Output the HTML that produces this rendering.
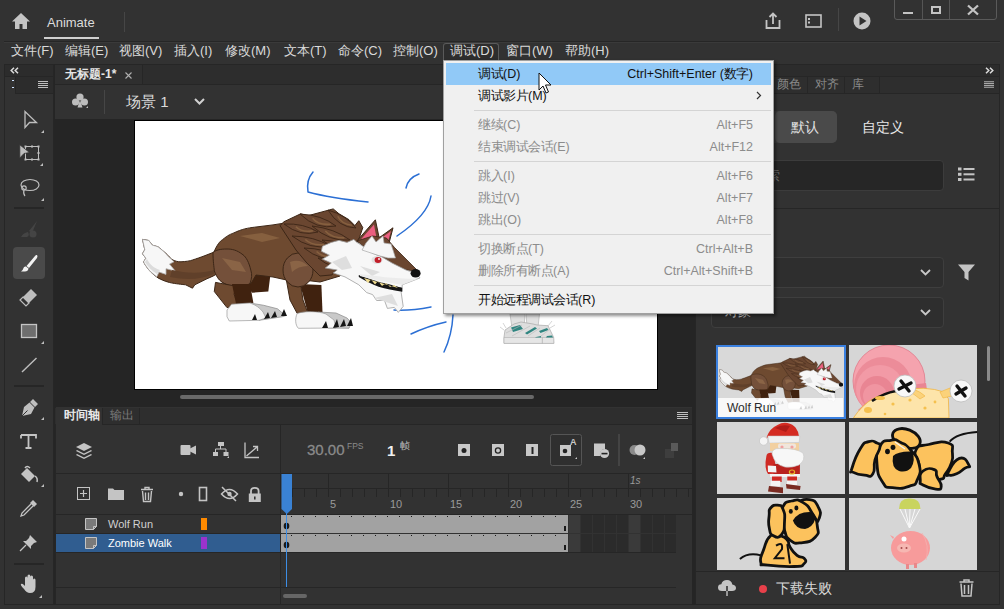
<!DOCTYPE html>
<html><head><meta charset="utf-8">
<style>
*{box-sizing:border-box;margin:0;padding:0}
html,body{width:1004px;height:609px;overflow:hidden;background:#323232;font-family:"Liberation Sans",sans-serif;color:#d6d6d6}
.a{position:absolute}
.t{position:absolute;white-space:nowrap;line-height:1}
svg{position:absolute;overflow:visible}
.c{display:inline-block;width:1em;text-align:center;font-style:normal}
.mi{position:absolute;top:-2px;height:22px;line-height:22px;font-size:13px;color:#dadada;white-space:nowrap}
.pi{position:absolute;left:478px;font-size:12.5px;color:#111;white-space:nowrap;line-height:14px}
.ps{position:absolute;right:251px;font-size:12.5px;color:#111;white-space:nowrap;line-height:14px;text-align:right}
.dis{color:#8c8c8c}
.sep{position:absolute;left:474px;width:297px;height:1px;background:#d4d4d4}
</style></head><body>
<!-- title bar -->
<div class="a" style="left:0;top:0;width:1004px;height:42px;background:#323232"></div>
<div class="a" style="left:4px;top:41px;width:996px;height:1px;background:#262626"></div>
<svg style="left:11px;top:12px" width="20" height="18" viewBox="0 0 20 18"><path d="M10 1 L19 9.5 H16 V17 H11.5 V12 H8.5 V17 H4 V9.5 H1 Z" fill="#c4c4c4"/></svg>
<div class="t" style="left:47px;top:16px;font-size:13px;color:#dcdcdc">Animate</div>
<div class="a" style="left:44px;top:37px;width:55px;height:2px;background:#cfcfcf"></div>
<div class="a" style="left:124px;top:12px;width:1px;height:20px;background:#464646"></div>
<!-- title right icons -->
<svg style="left:764px;top:12px" width="18" height="18" viewBox="0 0 18 18"><path d="M2.5 8 V16 H15.5 V8 M9 12 V2 M5.5 5 L9 1.5 L12.5 5" fill="none" stroke="#c4c4c4" stroke-width="1.8"/></svg>
<svg style="left:805px;top:14px" width="17" height="14" viewBox="0 0 17 14"><rect x="1" y="1" width="15" height="12" fill="none" stroke="#c4c4c4" stroke-width="1.6"/><rect x="3" y="4" width="2" height="2" fill="#c4c4c4"/><rect x="3" y="7.5" width="2" height="2" fill="#c4c4c4"/></svg>
<div class="a" style="left:838px;top:8px;width:1px;height:23px;background:#464646"></div>
<svg style="left:853px;top:12px" width="18" height="18" viewBox="0 0 18 18"><circle cx="9" cy="9" r="8.5" fill="#c4c4c4"/><path d="M6.5 4.5 L13.5 9 L6.5 13.5 Z" fill="#323232"/></svg>
<div class="a" style="left:894px;top:-2px;width:103px;height:22px;border:1px solid #5a5a5a;border-radius:0 0 3px 3px"></div>
<div class="a" style="left:922px;top:0;width:1px;height:19px;background:#555"></div>
<div class="a" style="left:949px;top:0;width:1px;height:19px;background:#555"></div>
<div class="a" style="left:903px;top:12px;width:10px;height:2px;background:#c4c4c4"></div>
<div class="a" style="left:931px;top:6px;width:10px;height:8px;border:2px solid #c4c4c4"></div>
<svg style="left:967px;top:5px" width="12" height="10" viewBox="0 0 12 10"><path d="M1 0.5 L11 9.5 M11 0.5 L1 9.5" stroke="#c4c4c4" stroke-width="2.3"/></svg>
<!-- menu bar -->
<div class="a" style="left:0;top:42px;width:1004px;height:23px;background:#323232"></div>
<div class="a" style="left:4px;top:42px;width:996px;height:1px;background:#3a3a3a"></div>
<div class="a" style="left:443px;top:43px;width:56px;height:17px;border:1px solid #5a5a5a;border-bottom:none;border-radius:3px 3px 0 0;background:#2d2d2d"></div>
<div class="a" style="left:0;top:42px;width:1004px;height:22px">
<div class="mi" style="left:11px"><i class="c">文</i><i class="c">件</i>(F)</div>
<div class="mi" style="left:65px"><i class="c">编</i><i class="c">辑</i>(E)</div>
<div class="mi" style="left:119px"><i class="c">视</i><i class="c">图</i>(V)</div>
<div class="mi" style="left:174px"><i class="c">插</i><i class="c">入</i>(I)</div>
<div class="mi" style="left:225px"><i class="c">修</i><i class="c">改</i>(M)</div>
<div class="mi" style="left:284px"><i class="c">文</i><i class="c">本</i>(T)</div>
<div class="mi" style="left:338px"><i class="c">命</i><i class="c">令</i>(C)</div>
<div class="mi" style="left:393px"><i class="c">控</i><i class="c">制</i>(O)</div>
<div class="mi" style="left:450px"><i class="c">调</i><i class="c">试</i>(D)</div>
<div class="mi" style="left:506px"><i class="c">窗</i><i class="c">口</i>(W)</div>
<div class="mi" style="left:565px"><i class="c">帮</i><i class="c">助</i>(H)</div>
</div>
<!-- left toolbar -->
<div class="a" style="left:53px;top:64px;width:3px;height:541px;background:#252525"></div>
<div class="a" style="left:4px;top:64px;width:50px;height:541px;background:#323232;border:1px solid #262626"></div>
<div class="a" style="left:5px;top:65px;width:48px;height:12px;background:#2c2c2c;border-bottom:1px solid #262626"></div>
<div class="a" style="left:15px;top:77px;width:38px;height:17px;background:#2c2c2c;border-left:1px solid #262626;border-bottom:1px solid #262626"></div>
<svg style="left:10px;top:67px" width="9" height="7" viewBox="0 0 9 7"><path d="M4 .8L1.2 3.5L4 6.2M8 .8L5.2 3.5L8 6.2" fill="none" stroke="#dcdcdc" stroke-width="1.5"/></svg>
<div class="a" style="left:12px;top:80px;width:2px;height:1px;background:#cfe3ff"></div>
<div class="a" style="left:12px;top:87px;width:2px;height:1px;background:#cfe3ff"></div>
<svg style="left:38px;top:81px" width="10" height="7" viewBox="0 0 10 7"><path d="M0 .5H10M0 2.5H10M0 4.5H10M0 6.5H10" stroke="#bdbdbd" stroke-width="1"/></svg>
<!-- tools -->
<svg style="left:0;top:0" width="60" height="609" viewBox="0 0 60 609">
<g fill="none" stroke="#bebebe" stroke-width="1.3">
<path d="M25 111.5 V127.5 L29.5 122.5 H36.5 Z"/>
</g>
<path d="M41 133 L44 130 V133 Z" fill="#bebebe"/>
<!-- free transform -->
<rect x="25.5" y="146.5" width="13" height="13" fill="none" stroke="#bebebe" stroke-width="1"/>
<g fill="#bebebe"><rect x="24.5" y="145.5" width="2" height="2"/><rect x="31" y="145.5" width="2" height="2"/><rect x="37.5" y="145.5" width="2" height="2"/><rect x="37.5" y="152" width="2" height="2"/><rect x="37.5" y="158.5" width="2" height="2"/><rect x="31" y="158.5" width="2" height="2"/><rect x="24.5" y="158.5" width="2" height="2"/></g>
<path d="M19.8 144.8 V158 L24 153.5 L29.5 152.5 Z" fill="#bebebe" stroke="#323232" stroke-width="0.8"/>
<path d="M40 166 L43 163 V166 Z" fill="#bebebe"/>
<!-- lasso -->
<g fill="none" stroke="#bebebe" stroke-width="1.2"><ellipse cx="30" cy="185" rx="9" ry="5.5"/><circle cx="24" cy="188" r="2.2"/><path d="M24 190 Q23 194 25 196"/></g>
<path d="M41 201 L44 198 V201 Z" fill="#bebebe"/>
<rect x="14" y="207" width="30" height="2" fill="#262626"/>
<!-- faded brush -->
<g fill="#444"><path d="M37 221 L29 231 L32 233 Z"/><path d="M28 232 Q23 233 21 237 H27 Q30 236 28 232Z"/><circle cx="33" cy="234" r="3.5"/></g>
<!-- selected brush -->
<rect x="13" y="247" width="32" height="32" rx="4" fill="#4a4a4a"/>
<path d="M37 255 Q38 256 37 258 L29 268 L26.5 266 L35 256 Q36 254.5 37 255Z" fill="#f2f2f2"/>
<path d="M26 266.5 L28.5 268.5 Q28 272 24 271.5 Q22 271.3 21 271.5 Q23 270 23.5 268 Q24 266 26 266.5Z" fill="#f2f2f2"/>
<!-- eraser -->
<path d="M31 289 L37 295 L29 303 L23 297 Z" fill="#bebebe"/>
<path d="M23 297 L29 303 L26 306 L20 300 Z" fill="none" stroke="#bebebe" stroke-width="1.2"/>
<!-- rectangle -->
<rect x="21.5" y="324.5" width="15" height="13" fill="#6e6e6e" stroke="#c4c4c4" stroke-width="1.3"/>
<path d="M41 344 L44 341 V344 Z" fill="#bebebe"/>
<!-- line -->
<path d="M22 372 L36.5 358" stroke="#bebebe" stroke-width="1.4"/>
<rect x="14" y="385" width="30" height="2" fill="#262626"/>
<!-- pen -->
<path d="M33 399 L38 404 L35 407 L30 402Z M29.5 402.5 L34.5 407.5 L31 414 L22 416 L24 407Z" fill="#bebebe"/>
<path d="M22 416 L27.5 410.5" stroke="#323232" stroke-width="1"/>
<path d="M41 420 L44 417 V420 Z" fill="#bebebe"/>
<!-- text T -->
<path d="M21 435 H36 V438.5 M21 435 V438.5 M28.5 435 V448 M25.5 448 H31.5" fill="none" stroke="#c4c4c4" stroke-width="1.8"/>
<!-- bucket -->
<path d="M27 468 L35 476 L29 482 L21 474 Z" fill="#c4c4c4"/>
<path d="M25 468 Q27 465 30 468 M35 476 Q38 478 37 482" fill="none" stroke="#c4c4c4" stroke-width="1.5"/>
<path d="M41 487 L44 484 V487 Z" fill="#bebebe"/>
<!-- eyedropper -->
<path d="M33 500 L37 504 L34 507 L30 503Z" fill="#c4c4c4"/>
<path d="M31 504 L22 513 L21 516 L24 515 L33 506" fill="none" stroke="#c4c4c4" stroke-width="1.3"/>
<!-- pin -->
<path d="M30 535 L37 542 L34 543 L31 546 L31 549 L23 541 L26 541 L29 538 Z" fill="#c4c4c4"/>
<path d="M26 545 L20 551" stroke="#c4c4c4" stroke-width="1.3"/>
<rect x="14" y="563" width="30" height="2" fill="#262626"/>
<!-- hand -->
<path d="M24 589 Q20 585 21 584 Q22 583 24 585 L25 586 V578 Q25 576.5 26.3 576.5 Q27.5 576.5 27.5 578 V583 V576 Q27.5 574.5 29 574.5 Q30.3 574.5 30.3 576 V583 V577 Q30.3 575.5 31.6 575.5 Q33 575.5 33 577 V584 V580 Q33 578.5 34.3 578.5 Q35.5 578.5 35.5 580 V587 Q35.5 593 30 593 Q26.5 593 24 589Z" fill="#c8c8c8"/>
<path d="M39 598 L42 595 V598 Z" fill="#bebebe"/>
</svg>
<!-- document area -->
<div class="a" style="left:55px;top:64px;width:638px;height:21px;background:#2d2d2d;border-top:1px solid #262626;border-bottom:1px solid #262626"></div>
<div class="a" style="left:55px;top:65px;width:88px;height:19px;background:#2f2f2f;border-right:1px solid #262626"></div>
<div class="t" style="left:65px;top:68px;font-size:12px;font-weight:bold;color:#e6e6e6"><i class="c">无</i><i class="c">标</i><i class="c">题</i>-1*</div>
<svg style="left:125px;top:72px" width="7" height="7" viewBox="0 0 7 7"><path d="M.5 .5L6.5 6.5M6.5 .5L.5 6.5" stroke="#b0b0b0" stroke-width="1.1"/></svg>
<div class="a" style="left:55px;top:85px;width:638px;height:34px;background:#323232"></div>
<svg style="left:71px;top:92px" width="18" height="18" viewBox="0 0 18 18"><circle cx="9" cy="5" r="3.6" fill="#bdbdbd"/><circle cx="4.6" cy="10" r="3.6" fill="#bdbdbd"/><circle cx="13.4" cy="10" r="3.6" fill="#bdbdbd"/><path d="M9 8 L11.5 15.5 H6.5Z" fill="#bdbdbd"/><path d="M15 16 L17 14 V16Z" fill="#bdbdbd"/></svg>
<div class="a" style="left:104px;top:90px;width:1px;height:24px;background:#464646"></div>
<div class="t" style="left:126px;top:94px;font-size:15px;color:#dadada"><i class="c">场</i><i class="c">景</i> 1</div>
<svg style="left:194px;top:98px" width="11" height="7" viewBox="0 0 11 7"><path d="M1 1L5.5 5.5L10 1" fill="none" stroke="#d0d0d0" stroke-width="2"/></svg>
<div class="a" style="left:55px;top:119px;width:638px;height:288px;background:#252525"></div>
<div class="a" style="left:134px;top:120px;width:524px;height:270px;background:#fff;border:1px solid #000"></div>
<!-- stage drawing -->
<svg style="left:0;top:0" width="1004" height="609" viewBox="0 0 1004 609">
<g stroke-linejoin="round">
<!-- blue strokes -->
<g fill="none" stroke="#2b6fd4" stroke-width="1.5" stroke-linecap="round">
<path d="M313 172 Q306 180 308 192 Q330 198 368 202"/>
<path d="M419 174 Q408 178 406 188"/>
<path d="M431 196 Q428 215 397 236"/>
<path d="M394 310 Q410 311 431 307"/>
<path d="M411 334 Q428 326 446 322"/>
<path d="M453 315 Q452 335 444 352"/>
</g>
<g id="wolf">
<!-- tail brown -->
<path d="M142.5 239.4 L148.8 240.5 L152.2 245.1 L158 246.8 C162 250 166 253 171.8 259.5 C175 261 178 262 181 261.8 C186 261.5 190 261 192.5 260 C197 258.5 200 257.5 204 256 L214.3 252 L216 274.4 C212 277 208 278 204 280.2 L194.8 284.8 L192.5 288.2 L185.6 284.8 C178 284 174 283.5 169.5 282.5 C164 281 161 279.5 158 277.9 C154 275 151 272.5 148.8 269.8 C146 266 144.5 264 143.6 261.8 L145.9 258.3 L142.5 253.7 L144.8 249.7 Z" fill="#6e4a30" stroke="#3c2616" stroke-width="1"/>
<!-- tail white -->
<path d="M142.5 239.4 L148.8 240.5 L152.2 245.1 L158 246.8 C162 250 165 252.5 168.3 256.6 L174 261.8 L169.5 264.1 L175.2 271 L166 268.7 L166 274.4 L159 272 L156.8 276.7 C153 274 150.5 271.5 148.8 269.8 C146 266 144.5 264 143.6 261.8 L145.9 258.3 L142.5 253.7 L144.8 249.7 Z" fill="#f7f7f7" stroke="#b0b0b0" stroke-width="0.8"/>
<path d="M145 262 C148 267 152 271 157 274 L160 270 C154 268 150 265 147 259Z" fill="#dcdcdc"/>
<path d="M172 270 C185 273 200 274 214 270 L214 274 C200 280 185 280 170 277Z" fill="#60402a"/>
<!-- dark inner back leg -->
<path d="M244 262 L272 262 L268.3 291.5 L252.2 292.7 L246 285 Z" fill="#40220f"/>
<!-- body -->
<path d="M214.3 251.3 C217 245 220 241 222.4 239.8 C228 235 231 234 233.9 232.9 C242 229 248 228 254.5 227.2 L273 224.9 L295 221.4 L318 226 L345 240 L352 262 L340 276 L320 282 L295 279 L286.7 280 L273 277 L256 275 L251 283.5 L238.4 287 C230 286 224 284 222.4 282.4 C216 276 214 270 214.3 262 Z" fill="#6e4a30" stroke="#3c2616" stroke-width="1"/>
<path d="M240 236 L262 233 L280 238 L262 242 Z M290 232 L310 236 L296 244Z" fill="#86603f"/>
<!-- back thigh -->
<path d="M213 252.5 C213 262 214 266 214.3 270.9 C217 278 220 281 222.4 282.4 C229 286 233 287 238.4 287 C244 286 248 285 250 283.5 C252 278 252 274 251 270.9 C249 262 246 257 243 254.8 C237 250 232 249 227 249 C220 249 216 250 213 252.5 Z" fill="#74503a" stroke="#3c2616" stroke-width="1"/>
<path d="M222 258 L240 262 L246 272 L232 270Z" fill="#8a6446"/>
<!-- back leg -->
<path d="M215.5 282.4 L214.3 291.5 L227 307.6 L238.4 305.3 L233.9 293.9 L240.7 287 Z" fill="#6e4a30" stroke="#3c2616" stroke-width="1"/>
<path d="M232 284 L250 284 L253.4 303 L236.1 304.2 Z" fill="#40220f"/>
<!-- back paw -->
<path d="M250 303 L263.7 305.3 L277.5 308.8 L285.6 315.7 L282 316.8 L259 320.3 Z" fill="#c9c9c9" stroke="#8a8a8a" stroke-width="0.7"/>
<path d="M227 310 L231.6 304.2 L250 303 C256 305 260 308 263 312 L266 318 L259 320.3 L229.3 321 L227 316.8 Z" fill="#f7f7f7" stroke="#9a9a9a" stroke-width="0.7"/>
<path d="M252 320 L255 314 L257 320Z M264 319 L268 312 L270 318Z M271 318 L275 311 L277 317Z M281 316 L284 309 L287 316Z" fill="#151515"/>
<!-- front dark inner leg -->
<path d="M300 284 L321.4 285 L322.5 312.2 L307.6 312.2 Z" fill="#40220f"/>
<!-- front leg -->
<path d="M286 278 L300 280 L303 300 L307.6 312.2 L297.2 313.4 L290 300 Z" fill="#6e4a30" stroke="#3c2616" stroke-width="1"/>
<ellipse cx="298" cy="270" rx="15" ry="17" fill="#74503a" stroke="#3c2616" stroke-width="1"/>
<path d="M290 262 Q300 258 308 266 Q298 266 292 272Z" fill="#8a6446"/>
<!-- front paw -->
<path d="M318 312 L336 313 L347 318 L351.3 322.6 L349 328.3 L328 328 Z" fill="#c9c9c9" stroke="#8a8a8a" stroke-width="0.7"/>
<path d="M297.2 313.4 C305 311 318 311 326 314 L334 320 L336 328 L298.4 328.3 C295 325 295 318 297.2 313.4 Z" fill="#f7f7f7" stroke="#9a9a9a" stroke-width="0.7"/>
<path d="M322 328 L326 321 L328 328Z M333 328 L337 319 L339 327Z M340 327 L344 319 L346 326Z M347 326 L351 318 L353 326Z" fill="#151515"/>
<!-- mane feathers -->
<path d="M280 225.6 L284 221.7 L300.7 213.8 L307.6 215.8 L333.2 208.9 L339 213.8 L349 219.7 L354.9 225.6 L358.8 220.7 L362.8 227.6 L358.8 239.4 L345 258 L332 274.9 L320 276 L306 262 L296 250 Z" fill="#6a4630" stroke="#3c2616" stroke-width="1"/>
<path d="M284 224 Q300.6 237.2 318 232 Q303.9 223.1 284 224Z" fill="#6c4832" stroke="#3c2616" stroke-width="0.9"/>
<path d="M295.9 226.8 Q301.7 232.8 312.9 230.8" fill="none" stroke="#86603f" stroke-width="1.6"/>
<path d="M300 214 Q316.6 230.1 336 226 Q321.7 214.9 300 214Z" fill="#6c4832" stroke="#3c2616" stroke-width="0.9"/>
<path d="M312.6 218.2 Q318.2 225.3 330.6 224.2" fill="none" stroke="#86603f" stroke-width="1.6"/>
<path d="M328 210 Q338.5 227.5 356 228 Q346.3 215.4 328 210Z" fill="#6c4832" stroke="#3c2616" stroke-width="0.9"/>
<path d="M337.8 216.3 Q341.0 223.7 351.8 225.3" fill="none" stroke="#86603f" stroke-width="1.6"/>
<path d="M292 236 Q310.6 250.2 330 246 Q314.3 236.3 292 236Z" fill="#6c4832" stroke="#3c2616" stroke-width="0.9"/>
<path d="M305.3 239.5 Q311.8 245.9 324.3 244.5" fill="none" stroke="#86603f" stroke-width="1.6"/>
<path d="M312 226 Q329.8 242.1 350 240 Q334.8 228.6 312 226Z" fill="#6c4832" stroke="#3c2616" stroke-width="0.9"/>
<path d="M325.3 230.9 Q331.3 237.9 344.3 237.9" fill="none" stroke="#86603f" stroke-width="1.6"/>
<path d="M304 248 Q321.4 262.2 340 258 Q325.2 248.3 304 248Z" fill="#6c4832" stroke="#3c2616" stroke-width="0.9"/>
<path d="M316.6 251.5 Q322.6 257.8 334.6 256.5" fill="none" stroke="#86603f" stroke-width="1.6"/>
<path d="M322 240 Q338.4 253.2 356 250 Q342.1 240.9 322 240Z" fill="#6c4832" stroke="#3c2616" stroke-width="0.9"/>
<path d="M333.9 243.5 Q339.6 249.3 350.9 248.5" fill="none" stroke="#86603f" stroke-width="1.6"/>
<path d="M318 258 Q332.4 270.1 348 266 Q335.7 257.8 318 258Z" fill="#6c4832" stroke="#3c2616" stroke-width="0.9"/>
<path d="M328.5 260.8 Q333.5 266.3 343.5 264.8" fill="none" stroke="#86603f" stroke-width="1.6"/>
<!-- ears -->
<path d="M356 242 L375.4 219.8 L380 242 Z" fill="#6a4630" stroke="#3c2616" stroke-width="1"/>
<path d="M359.5 241 L374 224.5 L377 241 Z" fill="#ea5f80"/>
<path d="M376 240 L393 227.8 L388 247 Z" fill="#6a4630" stroke="#3c2616" stroke-width="1"/>
<path d="M379.5 239.5 L391 231 L387 245 Z" fill="#ea5f80"/>
<!-- brown forehead -->
<path d="M357 241 L372.6 236 L386.4 238 L394.3 247.3 L418 271 L406 270 L390 263 L380 257 L366.7 249 Z" fill="#6a4630" stroke="#3c2616" stroke-width="0.8"/>
<!-- white head fur -->
<path d="M322.4 246.3 L331.3 242.4 L339 240.4 L347 242.4 L353.9 239.4 L356.9 242.4 L364 247 L372 253 L382 257 L392 263 L406 270 L416 273.5 L420 277.9 L410 281.8 L402.2 284.8 L402.2 290.7 L401.2 292.6 L403.2 306.4 L398.3 312.4 L394.3 307.4 L387.4 308.4 L384.5 300.5 L376.6 300.5 L372.6 294.6 L366.7 292.6 L358.8 284.8 L345 276.9 L333.2 272.9 L337.2 270 L325.3 268 L331.3 263 L322.4 259.1 L329.3 255.2 L321.4 251.3 Z" fill="#f7f7f7" stroke="#a0a0a0" stroke-width="0.8"/>
<path d="M332 262 L346 256 L352 268 L342 270Z M374 298 L392 294 L398 306Z M360 266 L380 272 L372 276Z" fill="#dedede"/>
<!-- brow -->
<path d="M362 250 L366 243 L372 236 L376 242 L383 236 L384 243 L391 244 L393 250 L395.5 258 L388 258 L380 256 Z" fill="#f6f6f6" stroke="#a8a8a8" stroke-width="0.7"/>
<ellipse cx="377" cy="260" rx="5.5" ry="4" fill="#e2e2e2"/>
<ellipse cx="378" cy="260" rx="3.4" ry="3" fill="#c21f2a"/>
<circle cx="379" cy="259" r="0.9" fill="#fff"/>
<!-- mouth -->
<path d="M358.8 274.9 C370 279 382 282.8 382.5 282.8 C392 285 398 287 402.2 287.7 L402.2 291.7 C392 290 384 288.5 378.6 286.7 C372 284 366 281 358.8 276.9 Z" fill="#151515"/>
<path d="M364 278 L368 283 L371 279.5 L375 284.5 L378 281 L382 286 L386 283 L390 287 L394 285 L398 288 Z" fill="#f0dc90"/>
<path d="M360 274 C375 276 395 279 418 278.8 L410 281.8 L402.2 284.8 C390 283 375 280 360 276Z" fill="#ececec"/>
<ellipse cx="415.6" cy="273.2" rx="5" ry="4.3" fill="#111"/>
</g>
</g>
<!-- zombie ghost feet -->
<g>
<path d="M510 314 H525 L524 328 H512Z M526 314 H539.5 L538 327 H527Z" fill="#e2e2e2" stroke="#b4b4b4" stroke-width="0.7"/>
<path d="M504 337 L505 330 L514 324 L521 322 L533 324 L537 325 L548 325.7 L553.4 336.8 L553.8 343.4 L504 343.4 Z" fill="#dedede" stroke="#a8a8a8" stroke-width="0.7"/>
<path d="M504 337.5 H553.8 V343.4 H504Z" fill="#e6e6e6" stroke="#b0b0b0" stroke-width="0.6"/>
<path d="M542.3 337.5 V343.4" stroke="#a0a0a0" stroke-width="0.6"/>
<g fill="#2f8580"><path d="M511 327.5 L520 325 L523 329 L513 332Z"/><path d="M525 333 L535 327 L537 328.5 L527 334.5Z"/><path d="M539 331 L547 328 L548.5 330 L540.5 333Z"/><path d="M536 337 L541 336 L541 337.5 H535Z"/><path d="M547 336 L552 335.5 L553 337.5 H546Z"/></g>
<g stroke="#b8b8b8" stroke-width="0.6"><path d="M506 333 L522 325"/><path d="M512 336 L530 326"/><path d="M528 336 L540 328"/><path d="M541 336 L550 329"/><path d="M504 330 L500 327 M506 328 L503 323"/><path d="M548 326 L552 321 M550 328 L555 325"/></g>
</g>
</svg>
<div class="a" style="left:180px;top:395px;width:354px;height:4px;border-radius:2px;background:#6a6a6a"></div>
<!-- timeline -->
<div class="a" style="left:55px;top:407px;width:638px;height:198px;background:#323232;border:1px solid #262626;border-top:none"></div>
<div class="a" style="left:55px;top:408px;width:637px;height:17px;background:#2e2e2e;border-bottom:1px solid #262626"></div>
<div class="a" style="left:56px;top:408px;width:47px;height:17px;background:#323232;border-right:1px solid #262626"></div>
<div class="a" style="left:139px;top:408px;width:1px;height:16px;background:#262626"></div>
<div class="t" style="left:64px;top:409px;font-size:12px;color:#e8e8e8;font-weight:bold"><i class="c">时</i><i class="c">间</i><i class="c">轴</i></div>
<div class="t" style="left:110px;top:409px;font-size:12px;color:#7a7a7a"><i class="c">输</i><i class="c">出</i></div>
<svg style="left:677px;top:412px" width="11" height="7" viewBox="0 0 11 7"><path d="M0 .5H11M0 2.5H11M0 4.5H11M0 6.5H11" stroke="#c0c0c0" stroke-width="1"/></svg>
<!-- vertical divider -->
<div class="a" style="left:280px;top:425px;width:1px;height:179px;background:#262626"></div>
<div class="a" style="left:56px;top:473px;width:636px;height:1px;background:#262626"></div>
<!-- toolbar row icons -->
<svg style="left:0;top:0" width="700" height="609" viewBox="0 0 700 609">
<!-- layers -->
<g fill="#c4c4c4"><path d="M84 443 L92 447 L84 451 L76 447Z"/><path d="M77 450 L84 453.5 L91 450 L92 451 L84 455 L76 451Z"/><path d="M77 454 L84 457.5 L91 454 L92 455 L84 459 L76 455Z"/></g>
<!-- camera -->
<rect x="180.5" y="445" width="10" height="10" rx="1" fill="#c4c4c4"/><path d="M190 448.5 L196 445.5 V454.5 L190 451.5Z" fill="#c4c4c4"/>
<!-- hierarchy -->
<g fill="#c4c4c4"><rect x="218" y="442" width="6" height="4"/><rect x="213" y="452" width="5" height="4"/><rect x="223.5" y="452" width="5" height="4"/><path d="M220.5 446V449M215.5 449H226M215.5 449V452M226 449V452" stroke="#c4c4c4" stroke-width="1" fill="none"/><path d="M227 458 L229 456 V458Z"/></g>
<!-- graph -->
<path d="M245 442.5 V457.5 H259" fill="none" stroke="#c4c4c4" stroke-width="1.3"/><path d="M246.5 456 L257 447 M253 446.5 H257.5 V451" fill="none" stroke="#c4c4c4" stroke-width="1.3"/>
<!-- layer control row -->
<rect x="77.5" y="487.5" width="12" height="12" fill="none" stroke="#c4c4c4" stroke-width="1"/><path d="M83.5 490V497M80 493.5H87" stroke="#c4c4c4" stroke-width="1.2"/>
<path d="M108 488.5 H113 L114.5 490 H124 V500 H108Z" fill="#c4c4c4"/>
<g fill="none" stroke="#c4c4c4" stroke-width="1.4"><path d="M141 489.5H153M145 489.5V487.5H149V489.5"/><path d="M142.5 491 L143.5 501.5 H150.5 L151.5 491"/><path d="M145.5 492.5V500M148.5 492.5V500"/></g>
<circle cx="181" cy="494" r="2.2" fill="#c4c4c4"/>
<rect x="199.5" y="487.5" width="7" height="13" fill="none" stroke="#c4c4c4" stroke-width="1.6"/>
<g fill="none" stroke="#c4c4c4" stroke-width="1.5"><path d="M221.5 494 Q229.5 485 237.5 494 Q229.5 503 221.5 494Z"/><path d="M222 487 L236 501"/></g><circle cx="229.5" cy="494" r="2.2" fill="#c4c4c4"/>
<path d="M251 494 V491 Q251 487.8 254.8 487.8 Q258.6 487.8 258.6 491 V494" fill="none" stroke="#c4c4c4" stroke-width="1.8"/><rect x="248.8" y="493.5" width="12" height="8.5" fill="#c4c4c4"/><rect x="254" y="496.5" width="1.6" height="3" fill="#323232"/>
</svg>
<!-- layer rows -->
<div class="a" style="left:56px;top:514px;width:226px;height:1px;background:#262626"></div>
<div class="a" style="left:56px;top:533px;width:226px;height:1px;background:#262626"></div>
<div class="a" style="left:56px;top:534px;width:224px;height:18px;background:#305d90"></div>
<div class="a" style="left:56px;top:552px;width:226px;height:1px;background:#262626"></div>
<svg style="left:84px;top:517px" width="14" height="14" viewBox="0 0 14 14"><path d="M1.5 1.5H12.5V9.5L9.5 12.5H1.5Z" fill="#7a7a7a" stroke="#c4c4c4" stroke-width="1"/><path d="M12.5 9.5H9.5V12.5" fill="none" stroke="#c4c4c4" stroke-width="1"/></svg>
<svg style="left:84px;top:536px" width="14" height="14" viewBox="0 0 14 14"><path d="M1.5 1.5H12.5V9.5L9.5 12.5H1.5Z" fill="#7a7a7a" stroke="#c4c4c4" stroke-width="1"/><path d="M12.5 9.5H9.5V12.5" fill="none" stroke="#c4c4c4" stroke-width="1"/></svg>
<div class="t" style="left:108px;top:519px;font-size:11px;color:#d0d0d0">Wolf Run</div>
<div class="t" style="left:108px;top:538px;font-size:11px;color:#ffffff">Zombie Walk</div>
<div class="a" style="left:201px;top:518px;width:6px;height:12px;background:#ff8a00"></div>
<div class="a" style="left:201px;top:537px;width:6px;height:12px;background:#9b33cc"></div>
<div class="a" style="left:56px;top:587px;width:620px;height:1px;background:#262626"></div>
<div class="a" style="left:283px;top:594px;width:24px;height:4px;border-radius:2px;background:#666"></div>
<!-- ruler/frames -->
<div class="t" style="left:307px;top:442px;font-size:15px;color:#8a8a8a;-webkit-text-stroke:0.3px #8a8a8a">30.00</div>
<div class="t" style="left:347px;top:442px;font-size:8.5px;color:#8a8a8a">FPS</div>
<div class="t" style="left:387px;top:443px;font-size:15px;color:#f0f0f0;font-weight:bold">1</div>
<div class="t" style="left:400px;top:441px;font-size:10px;color:#bbbbbb"><i class="c">帧</i></div>
<svg style="left:0;top:0" width="1004" height="609" viewBox="0 0 1004 609">
<rect x="282" y="488" width="410" height="1" fill="#262626"/>
<rect x="328" y="474" width="1" height="23" fill="#262626"/>
<rect x="388" y="474" width="1" height="23" fill="#262626"/>
<rect x="448" y="474" width="1" height="23" fill="#262626"/>
<rect x="508" y="474" width="1" height="23" fill="#262626"/>
<rect x="568" y="474" width="1" height="23" fill="#262626"/>
<rect x="628" y="474" width="1" height="23" fill="#262626"/>
<rect x="292" y="489" width="1" height="8" fill="#262626"/>
<rect x="304" y="489" width="1" height="8" fill="#262626"/>
<rect x="316" y="489" width="1" height="8" fill="#262626"/>
<rect x="328" y="489" width="1" height="8" fill="#262626"/>
<rect x="340" y="489" width="1" height="8" fill="#262626"/>
<rect x="352" y="489" width="1" height="8" fill="#262626"/>
<rect x="364" y="489" width="1" height="8" fill="#262626"/>
<rect x="376" y="489" width="1" height="8" fill="#262626"/>
<rect x="388" y="489" width="1" height="8" fill="#262626"/>
<rect x="400" y="489" width="1" height="8" fill="#262626"/>
<rect x="412" y="489" width="1" height="8" fill="#262626"/>
<rect x="424" y="489" width="1" height="8" fill="#262626"/>
<rect x="436" y="489" width="1" height="8" fill="#262626"/>
<rect x="448" y="489" width="1" height="8" fill="#262626"/>
<rect x="460" y="489" width="1" height="8" fill="#262626"/>
<rect x="472" y="489" width="1" height="8" fill="#262626"/>
<rect x="484" y="489" width="1" height="8" fill="#262626"/>
<rect x="496" y="489" width="1" height="8" fill="#262626"/>
<rect x="508" y="489" width="1" height="8" fill="#262626"/>
<rect x="520" y="489" width="1" height="8" fill="#262626"/>
<rect x="532" y="489" width="1" height="8" fill="#262626"/>
<rect x="544" y="489" width="1" height="8" fill="#262626"/>
<rect x="556" y="489" width="1" height="8" fill="#262626"/>
<rect x="568" y="489" width="1" height="8" fill="#262626"/>
<rect x="580" y="489" width="1" height="8" fill="#262626"/>
<rect x="592" y="489" width="1" height="8" fill="#262626"/>
<rect x="604" y="489" width="1" height="8" fill="#262626"/>
<rect x="616" y="489" width="1" height="8" fill="#262626"/>
<rect x="628" y="489" width="1" height="8" fill="#262626"/>
<rect x="640" y="489" width="1" height="8" fill="#262626"/>
<rect x="652" y="489" width="1" height="8" fill="#262626"/>
<rect x="664" y="489" width="1" height="8" fill="#262626"/>
<rect x="676" y="489" width="1" height="8" fill="#262626"/>
<rect x="688" y="489" width="1" height="8" fill="#262626"/>
<rect x="282" y="514" width="410" height="1" fill="#262626"/>
<rect x="569" y="515" width="11" height="18" fill="#3a3a3a"/>
<rect x="569" y="534" width="11" height="18" fill="#3a3a3a"/>
<rect x="581" y="515" width="11" height="18" fill="#2b2b2b"/>
<rect x="581" y="534" width="11" height="18" fill="#2b2b2b"/>
<rect x="593" y="515" width="11" height="18" fill="#2b2b2b"/>
<rect x="593" y="534" width="11" height="18" fill="#2b2b2b"/>
<rect x="605" y="515" width="11" height="18" fill="#2b2b2b"/>
<rect x="605" y="534" width="11" height="18" fill="#2b2b2b"/>
<rect x="617" y="515" width="11" height="18" fill="#2b2b2b"/>
<rect x="617" y="534" width="11" height="18" fill="#2b2b2b"/>
<rect x="629" y="515" width="11" height="18" fill="#3a3a3a"/>
<rect x="629" y="534" width="11" height="18" fill="#3a3a3a"/>
<rect x="641" y="515" width="11" height="18" fill="#2b2b2b"/>
<rect x="641" y="534" width="11" height="18" fill="#2b2b2b"/>
<rect x="653" y="515" width="11" height="18" fill="#2b2b2b"/>
<rect x="653" y="534" width="11" height="18" fill="#2b2b2b"/>
<rect x="665" y="515" width="11" height="18" fill="#2b2b2b"/>
<rect x="665" y="534" width="11" height="18" fill="#2b2b2b"/>
<rect x="282" y="552" width="394" height="1" fill="#262626"/>
<rect x="281" y="515" width="287" height="18" fill="#a2a2a2"/>
<ellipse cx="286.5" cy="526" rx="2.8" ry="3.2" fill="#1a1a1a"/>
<rect x="564" y="526" width="2" height="5" fill="#1a1a1a"/>
<rect x="291" y="516" width="1" height="1" fill="#1a1a1a"/>
<rect x="303" y="516" width="1" height="1" fill="#1a1a1a"/>
<rect x="315" y="516" width="1" height="1" fill="#1a1a1a"/>
<rect x="327" y="516" width="1" height="1" fill="#1a1a1a"/>
<rect x="339" y="516" width="1" height="1" fill="#1a1a1a"/>
<rect x="351" y="516" width="1" height="1" fill="#1a1a1a"/>
<rect x="363" y="516" width="1" height="1" fill="#1a1a1a"/>
<rect x="375" y="516" width="1" height="1" fill="#1a1a1a"/>
<rect x="387" y="516" width="1" height="1" fill="#1a1a1a"/>
<rect x="399" y="516" width="1" height="1" fill="#1a1a1a"/>
<rect x="411" y="516" width="1" height="1" fill="#1a1a1a"/>
<rect x="423" y="516" width="1" height="1" fill="#1a1a1a"/>
<rect x="435" y="516" width="1" height="1" fill="#1a1a1a"/>
<rect x="447" y="516" width="1" height="1" fill="#1a1a1a"/>
<rect x="459" y="516" width="1" height="1" fill="#1a1a1a"/>
<rect x="471" y="516" width="1" height="1" fill="#1a1a1a"/>
<rect x="483" y="516" width="1" height="1" fill="#1a1a1a"/>
<rect x="495" y="516" width="1" height="1" fill="#1a1a1a"/>
<rect x="507" y="516" width="1" height="1" fill="#1a1a1a"/>
<rect x="519" y="516" width="1" height="1" fill="#1a1a1a"/>
<rect x="531" y="516" width="1" height="1" fill="#1a1a1a"/>
<rect x="543" y="516" width="1" height="1" fill="#1a1a1a"/>
<rect x="555" y="516" width="1" height="1" fill="#1a1a1a"/>
<rect x="281" y="534" width="287" height="18" fill="#a2a2a2"/>
<ellipse cx="286.5" cy="545" rx="2.8" ry="3.2" fill="#1a1a1a"/>
<rect x="564" y="545" width="2" height="5" fill="#1a1a1a"/>
<rect x="291" y="535" width="1" height="1" fill="#1a1a1a"/>
<rect x="303" y="535" width="1" height="1" fill="#1a1a1a"/>
<rect x="315" y="535" width="1" height="1" fill="#1a1a1a"/>
<rect x="327" y="535" width="1" height="1" fill="#1a1a1a"/>
<rect x="339" y="535" width="1" height="1" fill="#1a1a1a"/>
<rect x="351" y="535" width="1" height="1" fill="#1a1a1a"/>
<rect x="363" y="535" width="1" height="1" fill="#1a1a1a"/>
<rect x="375" y="535" width="1" height="1" fill="#1a1a1a"/>
<rect x="387" y="535" width="1" height="1" fill="#1a1a1a"/>
<rect x="399" y="535" width="1" height="1" fill="#1a1a1a"/>
<rect x="411" y="535" width="1" height="1" fill="#1a1a1a"/>
<rect x="423" y="535" width="1" height="1" fill="#1a1a1a"/>
<rect x="435" y="535" width="1" height="1" fill="#1a1a1a"/>
<rect x="447" y="535" width="1" height="1" fill="#1a1a1a"/>
<rect x="459" y="535" width="1" height="1" fill="#1a1a1a"/>
<rect x="471" y="535" width="1" height="1" fill="#1a1a1a"/>
<rect x="483" y="535" width="1" height="1" fill="#1a1a1a"/>
<rect x="495" y="535" width="1" height="1" fill="#1a1a1a"/>
<rect x="507" y="535" width="1" height="1" fill="#1a1a1a"/>
<rect x="519" y="535" width="1" height="1" fill="#1a1a1a"/>
<rect x="531" y="535" width="1" height="1" fill="#1a1a1a"/>
<rect x="543" y="535" width="1" height="1" fill="#1a1a1a"/>
<rect x="555" y="535" width="1" height="1" fill="#1a1a1a"/>
</svg>
<div class="t" style="left:330px;top:499px;font-size:11px;color:#9a9a9a">5</div>
<div class="t" style="left:390px;top:499px;font-size:11px;color:#9a9a9a">10</div>
<div class="t" style="left:450px;top:499px;font-size:11px;color:#9a9a9a">15</div>
<div class="t" style="left:510px;top:499px;font-size:11px;color:#9a9a9a">20</div>
<div class="t" style="left:570px;top:499px;font-size:11px;color:#9a9a9a">25</div>
<div class="t" style="left:630px;top:499px;font-size:11px;color:#9a9a9a">30</div>
<div class="t" style="left:630px;top:476px;font-size:10px;font-style:italic;color:#9a9a9a">1s</div>
<!-- frame buttons -->
<svg style="left:0;top:0" width="1004" height="609" viewBox="0 0 1004 609">
<rect x="458" y="444" width="12" height="12" fill="#c8c8c8"/><circle cx="464" cy="450.5" r="2.5" fill="#222"/>
<rect x="492" y="444" width="12" height="12" fill="#c8c8c8"/><circle cx="498" cy="450.5" r="2.6" fill="none" stroke="#222" stroke-width="1.3"/>
<rect x="526" y="444" width="12" height="12" fill="#c8c8c8"/><rect x="531.5" y="447" width="2" height="7" fill="#222"/>
<rect x="550.5" y="434.5" width="31" height="31" rx="2" fill="#2f2f2f" stroke="#555" stroke-width="1"/>
<rect x="560" y="445" width="11" height="11" fill="#c8c8c8"/><circle cx="565" cy="451" r="2.3" fill="#222"/>
<text x="570" y="445" font-size="9" font-family="Liberation Sans" font-weight="bold" fill="#c8c8c8">A</text>
<path d="M575 459 L577 457 V459Z" fill="#c8c8c8"/>
<path d="M594 443.5 H605 V449 A5 5 0 0 0 600.5 456 H594Z" fill="#c8c8c8"/><circle cx="604.5" cy="453.5" r="4.6" fill="#c8c8c8"/><rect x="601.5" y="452.8" width="6" height="1.6" fill="#222"/>
<rect x="618" y="434" width="2" height="32" fill="#444"/>
<circle cx="634.5" cy="450" r="5" fill="#8a8a8a"/><circle cx="640" cy="450" r="5.5" fill="#c8c8c8"/><path d="M643 459 L645 457 V459Z" fill="#c8c8c8"/>
<rect x="665" y="449" width="9" height="9" fill="#3e3e3e"/><rect x="671" y="443" width="7" height="8" fill="#5a5a5a"/>
<!-- playhead -->
<rect x="286" y="485" width="1" height="102" fill="#3d8ee6"/>
<path d="M281.5 474 H292 V509 L286.8 514 L281.5 509Z" fill="#3a82d4"/>
</svg>
<!-- right panel -->
<div class="a" style="left:692px;top:64px;width:3px;height:541px;background:#252525"></div>
<div class="a" style="left:695px;top:64px;width:305px;height:541px;background:#323232;border:1px solid #262626"></div>
<div class="a" style="left:696px;top:65px;width:303px;height:12px;background:#2c2c2c;border-bottom:1px solid #262626"></div>
<div class="a" style="left:696px;top:77px;width:303px;height:17px;background:#2e2e2e;border-bottom:1px solid #262626"></div>
<svg style="left:985px;top:67px" width="9" height="7" viewBox="0 0 9 7"><path d="M1 .8L3.8 3.5L1 6.2M5 .8L7.8 3.5L5 6.2" fill="none" stroke="#dcdcdc" stroke-width="1.5"/></svg>
<div class="a" style="left:807px;top:76px;width:1px;height:17px;background:#262626"></div>
<div class="a" style="left:844px;top:76px;width:1px;height:17px;background:#262626"></div>
<div class="a" style="left:879px;top:76px;width:1px;height:17px;background:#262626"></div>
<div class="t" style="left:777px;top:79px;font-size:11.5px;color:#8a8a8a"><i class="c">颜</i><i class="c">色</i></div>
<div class="t" style="left:815px;top:79px;font-size:11.5px;color:#8a8a8a"><i class="c">对</i><i class="c">齐</i></div>
<div class="t" style="left:852px;top:79px;font-size:11.5px;color:#8a8a8a"><i class="c">库</i></div>
<svg style="left:984px;top:81px" width="10" height="7" viewBox="0 0 11 7"><path d="M0 .5H11M0 2.5H11M0 4.5H11M0 6.5H11" stroke="#c0c0c0" stroke-width="1"/></svg>
<div class="a" style="left:713px;top:111px;width:124px;height:32px;border-radius:5px;background:#3c3c3c"></div>
<div class="a" style="left:775px;top:111px;width:62px;height:32px;border-radius:5px;background:#4a4a4a"></div>
<div class="t" style="left:791px;top:120px;font-size:14px;color:#e0e0e0"><i class="c">默</i><i class="c">认</i></div>
<div class="t" style="left:862px;top:120px;font-size:14px;color:#e8e8e8"><i class="c">自</i><i class="c">定</i><i class="c">义</i></div>
<div class="a" style="left:711px;top:160px;width:233px;height:31px;border-radius:4px;background:#262626;border:1px solid #3c3c3c"></div>
<div class="t" style="left:754px;top:169px;font-size:13px;color:#6e6e6e"><i class="c">搜</i><i class="c">索</i></div>
<svg style="left:958px;top:167px" width="18" height="15" viewBox="0 0 18 15"><g fill="#c4c4c4"><rect x="0" y="0.5" width="3.5" height="3"/><rect x="0" y="5.8" width="3.5" height="3"/><rect x="0" y="11" width="3.5" height="3"/><rect x="5.5" y="1" width="11" height="2"/><rect x="5.5" y="6.3" width="11" height="2"/><rect x="5.5" y="11.5" width="11" height="2"/></g></svg>
<div class="a" style="left:696px;top:208px;width:303px;height:1px;background:#262626"></div>
<div class="a" style="left:711px;top:257px;width:233px;height:31px;border-radius:4px;background:#2e2e2e;border:1px solid #3e3e3e"></div>
<svg style="left:920px;top:269px" width="11" height="7" viewBox="0 0 11 7"><path d="M1 1L5.5 5.5L10 1" fill="none" stroke="#c8c8c8" stroke-width="1.8"/></svg>
<svg style="left:958px;top:264px" width="17" height="17" viewBox="0 0 17 17"><path d="M0 0.5H17L10.5 8V16.5L6.5 14V8Z" fill="#c4c4c4"/></svg>
<div class="a" style="left:711px;top:297px;width:233px;height:31px;border-radius:4px;background:#2e2e2e;border:1px solid #3e3e3e"></div>
<div class="t" style="left:725px;top:305px;font-size:13px;color:#d0d0d0"><i class="c">对</i><i class="c">象</i></div>
<svg style="left:920px;top:309px" width="11" height="7" viewBox="0 0 11 7"><path d="M1 1L5.5 5.5L10 1" fill="none" stroke="#c8c8c8" stroke-width="1.8"/></svg>
<!-- thumbnails -->
<div class="a" style="left:716px;top:345px;width:130px;height:74px;background:#d9d9d9;border:2px solid #3a80e0"></div>
<div class="a" style="left:849px;top:345px;width:128px;height:73px;background:#d6d6d6"></div>
<div class="a" style="left:717px;top:422px;width:128px;height:72px;background:#d6d6d6"></div>
<div class="a" style="left:849px;top:422px;width:128px;height:72px;background:#d6d6d6"></div>
<div class="a" style="left:717px;top:498px;width:128px;height:72px;background:#d6d6d6"></div>
<div class="a" style="left:849px;top:498px;width:128px;height:72px;background:#d6d6d6"></div>
<svg style="left:0;top:0" width="1004" height="609" viewBox="0 0 1004 609">
<defs>
<clipPath id="c2"><rect x="849" y="345" width="128" height="73"/></clipPath>
<clipPath id="c1"><rect x="718" y="347" width="125" height="70"/></clipPath>
</defs>
<g clip-path="url(#c1)"><use href="#wolf" transform="matrix(0.445 0 0 0.445 656.1 263.2)"/></g>
<!-- snail -->
<g clip-path="url(#c2)">
<circle cx="889" cy="381" r="36" fill="#f5a3ae" stroke="#e07a8a" stroke-width="0.8"/>
<circle cx="883" cy="386" r="29" fill="#ec8c99"/>
<circle cx="880" cy="389" r="24" fill="#f29aa6"/>
<circle cx="877" cy="393" r="17" fill="#e98593"/>
<circle cx="875" cy="396" r="12" fill="#f095a1"/>
<path d="M858 410 Q880 388 926 383 L927 390 Q885 395 862 414Z" fill="#e98593"/>
<path d="M853.4 418 Q862 405 873 398.7 Q884 393 894 391.7 Q910 388 923.2 388.2 Q936 389 942.8 391.7 L948.4 398.7 L949 418 Z" fill="#fde4aa" stroke="#f0b440" stroke-width="0.8"/>
<path d="M872 401 Q884 393 896 391" fill="none" stroke="#111" stroke-width="2.6"/>
<g fill="#f5c04e"><ellipse cx="868" cy="410" rx="4" ry="3"/><circle cx="893" cy="404" r="1.6"/><circle cx="910" cy="400" r="1.6"/><circle cx="925" cy="408" r="1.6"/><circle cx="885" cy="414" r="1.3"/><circle cx="935" cy="402" r="1.4"/><ellipse cx="880" cy="398" rx="5" ry="2"/></g>
<path d="M913 389 Q921 392 925 396 L920 399 Q914 394 910 392Z" fill="#fbd27a" stroke="#f0b440" stroke-width="0.6"/>
<circle cx="905" cy="386" r="11" fill="#f8f8f8" stroke="#bbb" stroke-width="0.8"/>
<path d="M901 381 L909 391 M911 383 L899 389" stroke="#111" stroke-width="3.4" stroke-linecap="round"/>
<path d="M940 392 L950 388 L952 396 L943 398Z" fill="#fbd27a" stroke="#f0b440" stroke-width="0.6"/>
<circle cx="961" cy="391" r="11" fill="#f8f8f8" stroke="#bbb" stroke-width="0.8"/>
<path d="M957 386 L965 396 M966 388 L956 394" stroke="#111" stroke-width="3.4" stroke-linecap="round"/>
</g>
<!-- santa -->
<g>
<path d="M766.4 437.5 Q770 428 777.5 425 Q782 422 787.3 422.9 Q793 424 795.7 427.8 Q799 432 799.2 437.5Z" fill="#d42b22"/>
<path d="M775 428 Q782 424 790 426 L786 432Z" fill="#b01c18"/>
<path d="M767.8 436 L799.9 436 L799.2 442.4 L769.2 443.1Z" fill="#f0f0f0" stroke="#c0c0c0" stroke-width="0.5"/>
<circle cx="763.6" cy="441" r="4.2" fill="#f4f4f4" stroke="#bbb" stroke-width="0.5"/>
<rect x="770" y="443" width="29" height="8" fill="#f2d0a0"/>
<rect x="778" y="443.5" width="18" height="5" rx="2" fill="#f0e6dc"/>
<circle cx="782" cy="447" r="1.6" fill="#f0a0a0"/><circle cx="792" cy="447" r="1.6" fill="#f0a0a0"/>
<path d="M766.4 456 Q767 452 773 453 L777.5 473.8 L768 474 Q764 468 766.4 456Z" fill="#cf2a24"/>
<path d="M773.4 464 H799.9 V475 H773.4Z" fill="#b8221e"/>
<path d="M772 454 Q772 448 780 448.5 Q796 448 803 453 Q806 460 799 465 Q792 468 785 467 Q775 465 772 454Z" fill="#f7f7f7" stroke="#c8c8c8" stroke-width="0.6"/>
<path d="M767.8 465.4 L776 466 L776.5 472.4 L768 472Z" fill="#f2f2f2"/>
<rect x="770" y="474" width="30" height="3" fill="#f4f4f4"/>
<ellipse cx="792" cy="472" rx="2.6" ry="2" fill="none" stroke="#e5b426" stroke-width="1.2"/>
<path d="M772 476.6 H781.7 V482 H772Z M787.3 476.6 H797 V482 H787.3Z" fill="#cf2a24"/>
<path d="M770.6 480.8 H780.3 V486.3 H770.6Z M787 480.5 H797 V485 H787Z" fill="#f4f4f4"/>
<path d="M769 486 L783 487.5 L783 493.3 L768 491.5Z M786 484 L800.6 486 L800 490 L786.5 488.5Z" fill="#7a2b22"/>
</g>
<!-- dog lying -->
<g stroke="#111" stroke-width="2.8" stroke-linejoin="round" fill="#fcc25d">
<path d="M949.6 441.7 Q956.6 433.3 977.2 432" fill="none" stroke-width="2"/>
<path d="M948.2 472.4 C951.1 467.4 953.1 460.5 959.4 458.4 C965.7 456.3 967.4 462.5 969.1 465.4 C970.8 468.3 968.8 465.7 965.0 468.2 C961.2 470.7 961.2 471.7 956.6 473.8 C952.0 475.9 952.1 475.6 949.6 475.2 C947.1 474.8 945.3 477.4 948.2 472.4Z"/>
<path d="M916.0 450.0 C918.9 444.1 919.0 446.6 928.7 444.5 C938.4 442.4 941.1 440.5 948.2 443.0 C955.3 445.5 951.6 446.6 952.4 452.9 C953.2 459.2 953.1 457.7 951.0 464.0 C948.9 470.3 948.8 469.2 945.4 473.8 C942.0 478.4 946.5 478.1 939.8 479.4 C933.1 480.7 929.2 482.6 923.0 478.0 C916.8 473.4 921.1 472.4 919.0 464.0 C916.9 455.6 913.1 455.9 916.0 450.0Z"/>
<path d="M923.0 471.0 C927.2 467.6 930.1 467.9 934.3 469.6 C938.5 471.3 934.9 471.6 937.0 476.6 C939.1 481.6 941.6 482.6 941.2 486.3 C940.8 490.1 941.2 489.5 935.7 489.1 C930.2 488.7 927.6 487.5 923.0 485.0 C918.4 482.5 920.3 485.0 920.3 480.8 C920.3 476.6 918.8 474.4 923.0 471.0Z"/>
<ellipse cx="906.4" cy="438.5" rx="14.5" ry="9" transform="rotate(22 906.4 438.5)"/>
<path d="M880.0 446.0 C884.2 438.9 884.8 441.4 891.0 440.3 C897.2 439.2 894.9 439.5 900.8 442.4 C906.7 445.3 905.1 443.5 910.6 450.0 C916.1 456.5 916.9 455.2 919.0 464.0 C921.1 472.8 920.5 472.7 917.5 479.4 C914.5 486.1 916.5 483.8 909.0 486.3 C901.5 488.8 900.3 488.9 892.4 487.7 C884.5 486.5 887.3 489.3 882.7 482.2 C878.1 475.1 877.8 474.9 877.0 464.0 C876.2 453.1 875.8 453.1 880.0 446.0Z"/>
<path d="M852.0 468.2 C854.1 461.1 855.3 456.6 860.3 448.7 C865.3 440.8 863.7 443.4 868.7 441.7 C873.7 440.0 873.6 441.4 877.0 443.1 C880.4 444.8 880.5 442.3 879.9 447.3 C879.3 452.3 877.1 451.9 875.0 459.8 C872.9 467.8 876.0 469.2 872.9 473.8 C869.8 478.4 870.4 475.6 864.5 475.2 C858.6 474.8 857.1 474.5 853.4 472.4 C849.6 470.3 849.9 475.3 852.0 468.2Z"/>
</g>
<g fill="#111"><path d="M893 456 Q898 451 912 451.5 Q916 460 911 468 Q906 473 899 471 Q891 468 893 456Z"/><ellipse cx="887.5" cy="451.5" rx="2.4" ry="2.8"/><ellipse cx="893" cy="447.3" rx="2.4" ry="2.6"/></g>
<path d="M895 442 L905 449" stroke="#f5f5f5" stroke-width="1.2"/>
<!-- dog sitting -->
<g stroke="#111" stroke-width="2.8" stroke-linejoin="round" fill="#fcc25d">
<path d="M739.9 558.9 Q748.3 552 761 555.4" fill="none" stroke-width="2"/>
<path d="M770.6 535.8 C775.6 531.6 775.3 534.5 780.3 535.8 C785.3 537.1 784.4 536.6 787.3 540.0 C790.2 543.4 787.1 542.4 790.0 547.0 C792.9 551.6 792.8 552.0 797.0 555.4 C801.2 558.8 801.9 555.7 804.0 558.2 C806.1 560.7 806.9 561.2 804.0 563.7 C801.1 566.2 805.2 566.1 794.3 566.5 C783.4 566.9 777.8 566.4 767.8 565.1 C757.8 563.8 762.1 566.9 760.8 562.3 C759.5 557.7 760.7 557.8 763.6 549.8 C766.5 541.8 765.6 540.0 770.6 535.8Z"/>
<path d="M798.5 503.8 C799.8 500.5 803.8 498.8 809.6 499.6 C815.5 500.4 815.1 501.2 818.0 506.6 C820.9 512.0 821.1 513.1 819.4 517.7 C817.7 522.3 816.6 524.0 812.4 521.9 C808.2 519.8 809.6 516.1 805.4 510.7 C801.2 505.3 797.2 507.1 798.5 503.8Z"/>
<path d="M783.0 506.6 C785.7 501.6 785.6 502.3 791.5 501.0 C797.4 499.7 796.4 498.6 802.7 502.4 C809.0 506.1 808.0 506.4 812.4 513.5 C816.8 520.6 816.5 518.9 817.3 526.0 C818.1 533.1 820.0 532.2 815.2 537.2 C810.4 542.2 808.9 542.0 801.3 542.8 C793.7 543.6 795.0 543.8 790.0 540.0 C785.0 536.2 786.8 537.0 784.5 530.3 C782.2 523.6 782.9 524.8 782.4 517.7 C781.9 510.6 780.3 511.6 783.0 506.6Z"/>
<path d="M770.6 508.0 C773.1 505.1 773.8 504.8 777.5 505.2 C781.2 505.6 780.9 504.3 783.0 509.3 C785.1 514.3 784.9 514.4 784.5 521.9 C784.1 529.4 785.0 530.2 781.7 534.4 C778.4 538.6 777.1 537.9 773.4 535.8 C769.6 533.7 770.5 533.8 769.2 527.5 C767.9 521.2 768.8 520.8 769.2 514.9 C769.6 509.0 768.1 510.9 770.6 508.0Z"/>
</g>
<g fill="#111"><path d="M792.9 520.5 Q798 512 809.6 512.1 Q816 514 815.2 519 Q813 527 805 529 Q795.7 529 792.9 520.5Z"/><ellipse cx="790.8" cy="511.4" rx="2" ry="2.4"/><ellipse cx="796.4" cy="508" rx="2" ry="2.4"/></g>
<path d="M776 545.6 Q783 541 782 549 L774.8 558.2 L784.5 558.2 M787.3 544.2 L790 563.7" fill="none" stroke="#111" stroke-width="2"/>
<!-- pig parachute -->
<path d="M899 509 Q899 498 909.5 498.5 Q920.5 498 920.5 509 Z" fill="#c9d45e"/>
<g stroke="#fafafa" stroke-width="1"><path d="M900 509 L909.5 528 M905 509 L909.5 528 M910 509 L909.5 528 M915 509 L909.5 528 M920 509 L909.5 528"/></g>
<ellipse cx="910.5" cy="548" rx="19.5" ry="17" fill="#f79b9b"/>
<path d="M922 533 Q930 545 926 560" fill="none" stroke="#f4b0b0" stroke-width="0.8"/>
<ellipse cx="904" cy="548" rx="7" ry="4.5" fill="#f6b7b2"/>
<g fill="#a34a4a"><circle cx="901.5" cy="548" r="1"/><circle cx="906.5" cy="548" r="1"/></g>
<circle cx="904" cy="539" r="2.5" fill="#fff"/>
<path d="M906 564 H909 V569 H906Z M914 563 H917 V568 H914Z" fill="#e9888a"/>
<path d="M894 537 L890 535 L893 539Z" fill="#f79b9b"/>
</svg>
<div class="a" style="left:718px;top:398px;width:125px;height:19px;background:rgba(255,255,255,.8)"></div>
<div class="t" style="left:727px;top:402px;font-size:12px;color:#2a2a2a">Wolf Run</div>
<div class="a" style="left:987px;top:346px;width:3px;height:35px;border-radius:2px;background:#8a8a8a"></div>
<div class="a" style="left:696px;top:571px;width:303px;height:33px;background:#323232;border-top:1px solid #262626"></div>
<svg style="left:718px;top:579px" width="18" height="18" viewBox="0 0 18 18"><path d="M4 12 Q0 12 0 8.5 Q0 5.3 3.3 5.2 Q4.5 1 9 1 Q13.5 1 14.3 5.5 Q18 6 18 9 Q18 12 14 12Z" fill="#c4c4c4"/><path d="M9 7V16M6 13L9 16L12 13" fill="none" stroke="#323232" stroke-width="1.6"/><path d="M9 12V17" stroke="#c4c4c4" stroke-width="1.4"/></svg>
<div class="a" style="left:759px;top:585px;width:8px;height:8px;border-radius:50%;background:#e8404a"></div>
<div class="t" style="left:776px;top:581px;font-size:14px;color:#d8d8d8"><i class="c">下</i><i class="c">载</i><i class="c">失</i><i class="c">败</i></div>
<svg style="left:959px;top:579px" width="15" height="18" viewBox="0 0 15 18"><g fill="none" stroke="#c4c4c4" stroke-width="1.5"><path d="M0.5 3H14.5M5 3V1H10V3"/><path d="M2 4.5L3 17H12L13 4.5"/><path d="M5.5 6V15M9.5 6V15"/></g></svg>
<!-- popup menu -->
<div class="a" style="left:443px;top:60px;width:331px;height:254px;background:#f0f0f0;border:1px solid #a0a0a0;box-shadow:2px 2px 3px rgba(0,0,0,.45)"></div>
<div class="a" style="left:446px;top:63px;width:325px;height:22px;background:#91c9f7"></div>
<div class="pi" style="top:67px"><i class="c">调</i><i class="c">试</i>(D)</div>
<div class="ps" style="top:67px">Ctrl+Shift+Enter (<i class="c">数</i><i class="c">字</i>)</div>
<div class="pi" style="top:89px"><i class="c">调</i><i class="c">试</i><i class="c">影</i><i class="c">片</i>(M)</div>
<svg style="left:756px;top:91px" width="6" height="9" viewBox="0 0 6 9"><path d="M1 1L4.5 4.5L1 8" fill="none" stroke="#333" stroke-width="1.2"/></svg>
<div class="sep" style="top:110px"></div>
<div class="pi dis" style="top:118px"><i class="c">继</i><i class="c">续</i>(C)</div><div class="ps dis" style="top:118px">Alt+F5</div>
<div class="pi dis" style="top:140px"><i class="c">结</i><i class="c">束</i><i class="c">调</i><i class="c">试</i><i class="c">会</i><i class="c">话</i>(E)</div><div class="ps dis" style="top:140px">Alt+F12</div>
<div class="sep" style="top:161px"></div>
<div class="pi dis" style="top:169px"><i class="c">跳</i><i class="c">入</i>(I)</div><div class="ps dis" style="top:169px">Alt+F6</div>
<div class="pi dis" style="top:191px"><i class="c">跳</i><i class="c">过</i>(V)</div><div class="ps dis" style="top:191px">Alt+F7</div>
<div class="pi dis" style="top:213px"><i class="c">跳</i><i class="c">出</i>(O)</div><div class="ps dis" style="top:213px">Alt+F8</div>
<div class="sep" style="top:234px"></div>
<div class="pi dis" style="top:242px"><i class="c">切</i><i class="c">换</i><i class="c">断</i><i class="c">点</i>(T)</div><div class="ps dis" style="top:242px">Ctrl+Alt+B</div>
<div class="pi dis" style="top:264px"><i class="c">删</i><i class="c">除</i><i class="c">所</i><i class="c">有</i><i class="c">断</i><i class="c">点</i>(A)</div><div class="ps dis" style="top:264px">Ctrl+Alt+Shift+B</div>
<div class="sep" style="top:285px"></div>
<div class="pi" style="top:293px"><i class="c">开</i><i class="c">始</i><i class="c">远</i><i class="c">程</i><i class="c">调</i><i class="c">试</i><i class="c">会</i><i class="c">话</i>(R)</div>
<!-- cursor -->
<svg style="left:538px;top:72px" width="14" height="24" viewBox="0 0 14 24"><path d="M1 1 V18 L5 14 L8 21 L10.5 20 L7.5 13 H13 Z" fill="#fff" stroke="#111" stroke-width="1"/></svg>
</body></html>
